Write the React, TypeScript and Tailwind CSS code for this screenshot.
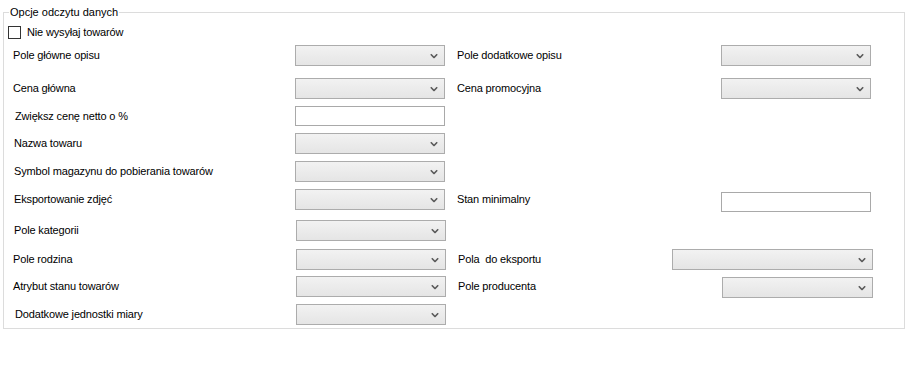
type Ctrl = "select" | "text"

interface RowDef {
    gap: string
    label: string
    labelPad: string
    left: Ctrl
    leftShift?: string
    rightLabel?: string
    rightPad?: string
    right?: Ctrl
    rightCls?: string
}

// odstępy i przesunięcia jak w formularzu WinForms
const rows: RowDef[] = [
    { gap: "mt-[6px]", label: "Pole główne opisu", labelPad: "pl-[9px]", left: "select", rightLabel: "Pole dodatkowe opisu", rightPad: "pl-[12px] pr-[33px]", right: "select", rightCls: "w-[150px]" },
    { gap: "mt-[12px]", label: "Cena główna", labelPad: "pl-[9px]", left: "select", rightLabel: "Cena promocyjna", rightPad: "pl-[12px] pr-[33px]", right: "select", rightCls: "w-[150px]" },
    { gap: "mt-[7px]", label: "Zwiększ cenę netto o %", labelPad: "pl-[11px]", left: "text" },
    { gap: "mt-[6px]", label: "Nazwa towaru", labelPad: "pl-[10px]", left: "select" },
    { gap: "mt-[7px]", label: "Symbol magazynu do pobierania towarów", labelPad: "pl-[10px]", left: "select" },
    { gap: "mt-[7px]", label: "Eksportowanie zdjęć", labelPad: "pl-[10px]", left: "select", rightLabel: "Stan minimalny", rightPad: "pl-[12px] pr-[33px]", right: "text", rightCls: "w-[150px] mt-[3px]" },
    { gap: "mt-[10px]", label: "Pole kategorii", labelPad: "pl-[10px]", left: "select", leftShift: "ml-[1px]" },
    { gap: "mt-[8px]", label: "Pole rodzina", labelPad: "pl-[9px]", left: "select", leftShift: "ml-[1px]", rightLabel: "Pola  do eksportu", rightPad: "pl-[12px] pr-[31px]", right: "select", rightCls: "w-[201px]" },
    { gap: "mt-[6px]", label: "Atrybut stanu towarów", labelPad: "pl-[9px]", left: "select", leftShift: "ml-[1px]", rightLabel: "Pole producenta", rightPad: "pl-[12px] pr-[31px]", right: "select", rightCls: "w-[151px] mt-[1px]" },
    { gap: "mt-[7px]", label: "Dodatkowe jednostki miary", labelPad: "pl-[11px]", left: "select", leftShift: "ml-[1px]" },
]

const Chevron = () => (
    <svg width="8" height="5" viewBox="0 0 8 5" className="absolute right-[6px] top-1/2 -translate-y-1/2">
        <path d="M0.8 0.8 L4 4 L7.2 0.8" fill="none" stroke="#5a5a5a" strokeWidth="1.6" />
    </svg>
)

const Control = ({ type, className }: { type: Ctrl; className: string }) => {
    if (type === "select") {
        return (
            <div className={`relative h-[21px] shrink-0 self-start border border-[#acacac] bg-gradient-to-b from-[#f2f2f2] to-[#e5e5e5] ${className}`}>
                <Chevron />
            </div>
        )
    }
    return <div className={`h-[20px] shrink-0 self-start border border-[#a9a9a9] bg-white ${className}`} />
}

const Row = ({ row }: { row: RowDef }) => (
    <div className={`flex h-[21px] items-center ${row.gap}`}>
        <div className={`w-[291px] shrink-0 truncate ${row.labelPad}`}>{row.label}</div>
        <Control type={row.left} className={`w-[150px] ${row.leftShift ?? ""}`} />
        {row.rightLabel && (
            <div className={`flex h-full flex-1 items-center justify-between ${row.rightPad}`}>
                <span className="whitespace-pre">{row.rightLabel}</span>
                <Control type={row.right ?? "select"} className={row.rightCls ?? ""} />
            </div>
        )}
    </div>
)

export default function App() {
    return (
        <div className="h-[365px] w-[905px] bg-white pt-[12px] pl-[3px] text-[11px] leading-[13px] tracking-[-0.15px] text-black [font-family:'Liberation_Sans',Arial,sans-serif]">
            <div className="relative h-[317px] w-[902px] border border-[#dcdcdc]">
                {/* legenda grupy */}
                <span className="absolute left-[5px] top-[-8px] bg-white px-[1px] leading-[14px] tracking-normal">
                    Opcje odczytu danych
                </span>

                <div className="mt-[13px] flex h-[13px] items-center pl-[4px]">
                    <div className="size-[13px] border border-[#333333] bg-white" />
                    <span className="ml-[6px]">Nie wysyłaj towarów</span>
                </div>

                {rows.map(row => (
                    <Row key={row.label} row={row} />
                ))}
            </div>
        </div>
    )
}
